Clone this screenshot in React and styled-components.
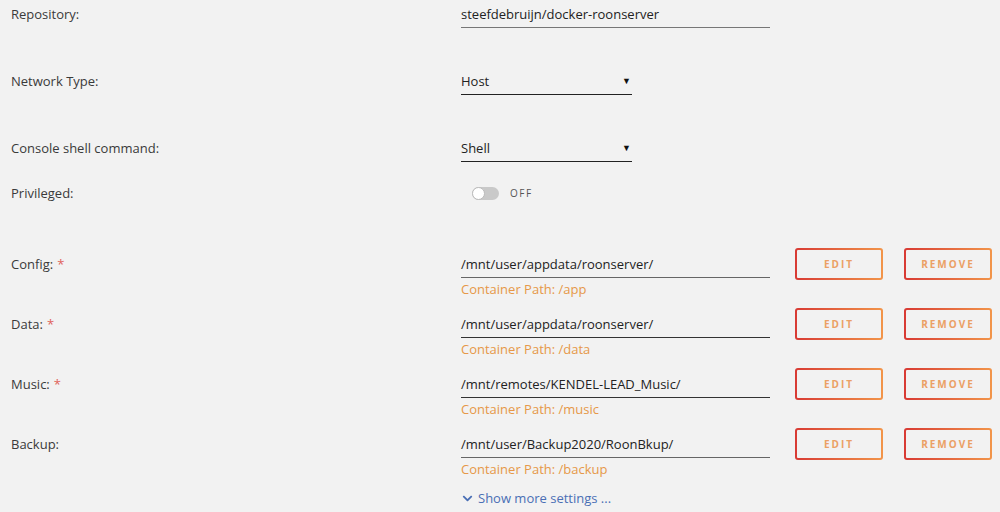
import React from "react";
import styled, { createGlobalStyle } from "styled-components";
import { FaChevronDown } from "react-icons/fa";

const GlobalStyle = createGlobalStyle`
  html, body {
    margin: 0;
    padding: 0;
    background: #f2f2f2;
  }
  body {
    font-family: "Open Sans", "Liberation Sans", sans-serif;
    font-size: 13px;
    color: #333;
  }
`;

const Page = styled.div`
  width: 1000px;
  height: 512px;
  overflow: hidden;
  padding: 4px 0 0 11px;
  box-sizing: border-box;
`;

const Row = styled.div`
  display: flex;
  align-items: flex-start;
  margin-bottom: ${(p) => p.$gap || 0}px;
`;

const Label = styled.div`
  width: 450px;
  flex: none;
  line-height: 20px;
  padding-top: ${(p) => p.$offset || 0}px;
  color: #3a3a3a;
`;

const Required = styled.span`
  color: #e0625a;
  margin-left: 4px;
`;

const Field = styled.div`
  display: flex;
  flex-direction: column;
  padding-top: ${(p) => p.$offset || 0}px;
`;

const Input = styled.div`
  width: ${(p) => p.$width || 309}px;
  line-height: 20px;
  padding-bottom: 3px;
  border-bottom: 1px solid ${(p) => p.$line || "#555"};
  color: #222;
  display: flex;
  justify-content: space-between;
  align-items: center;
`;

const Arrow = styled.span`
  font-size: 9px;
  color: #111;
  margin-right: 1px;
`;

const Hint = styled.div`
  line-height: 18px;
  margin-top: 2px;
  color: #e69848;
`;

const Toggle = styled.div`
  display: flex;
  align-items: center;
  gap: 11px;
  padding-left: 11px;
  height: 20px;
`;

const Track = styled.div`
  position: relative;
  width: 27px;
  height: 13px;
  border-radius: 7px;
  background: #c9c9c9;
`;

const Knob = styled.div`
  position: absolute;
  left: 0;
  top: 0;
  width: 13px;
  height: 13px;
  border-radius: 50%;
  background: #fff;
  box-sizing: border-box;
  border: 1px solid #bbb;
`;

const ToggleText = styled.span`
  font-size: 10px;
  letter-spacing: 1.5px;
  color: #555;
`;

const Buttons = styled.div`
  display: flex;
  gap: 21px;
  margin-left: 25px;
`;

const Button = styled.button`
  width: 88px;
  height: 32px;
  box-sizing: border-box;
  border: 2px solid transparent;
  border-radius: 3px;
  background: linear-gradient(#f2f2f2, #f2f2f2) padding-box,
    linear-gradient(90deg, #d83a34, #f2954a) border-box;
  font-family: "Open Sans", "Liberation Sans", sans-serif;
  font-size: 10px;
  font-weight: 700;
  letter-spacing: 2px;
  color: #eba064;
  padding: 0;
  cursor: pointer;
`;

const More = styled.div`
  display: flex;
  align-items: center;
  gap: 5px;
  margin-left: 451px;
  line-height: 20px;
  color: #4a6fb5;
  font-size: 13px;
`;

const paths = [
  { label: "Config:", req: true, value: "/mnt/user/appdata/roonserver/", cp: "/app", line: "#666" },
  { label: "Data:", req: true, value: "/mnt/user/appdata/roonserver/", cp: "/data", line: "#333" },
  { label: "Music:", req: true, value: "/mnt/remotes/KENDEL-LEAD_Music/", cp: "/music", line: "#333" },
  { label: "Backup:", req: false, value: "/mnt/user/Backup2020/RoonBkup/", cp: "/backup", line: "#666" },
];

export default function App() {
  return (
    <>
      <GlobalStyle />
      <Page>
        <Row $gap={43}>
          <Label>Repository:</Label>
          <Field>
            <Input $line="#777">steefdebruijn/docker-roonserver</Input>
          </Field>
        </Row>
        <Row $gap={43}>
          <Label>Network Type:</Label>
          <Field>
            <Input $width={171} $line="#222">
              Host<Arrow>▼</Arrow>
            </Input>
          </Field>
        </Row>
        <Row $gap={21}>
          <Label>Console shell command:</Label>
          <Field>
            <Input $width={171} $line="#222">
              Shell<Arrow>▼</Arrow>
            </Input>
          </Field>
        </Row>
        <Row $gap={45}>
          <Label>Privileged:</Label>
          <Toggle>
            <Track>
              <Knob />
            </Track>
            <ToggleText>OFF</ToggleText>
          </Toggle>
        </Row>
        {paths.map((p) => (
          <Row key={p.label} $gap={10}>
            <Label $offset={6}>
              {p.label}
              {p.req && <Required>*</Required>}
            </Label>
            <Field $offset={6}>
              <Input $line={p.line}>{p.value}</Input>
              <Hint>Container Path: {p.cp}</Hint>
            </Field>
            <Buttons>
              <Button>EDIT</Button>
              <Button>REMOVE</Button>
            </Buttons>
          </Row>
        ))}
        <More>
          <FaChevronDown size={11} />
          Show more settings ...
        </More>
      </Page>
    </>
  );
}
